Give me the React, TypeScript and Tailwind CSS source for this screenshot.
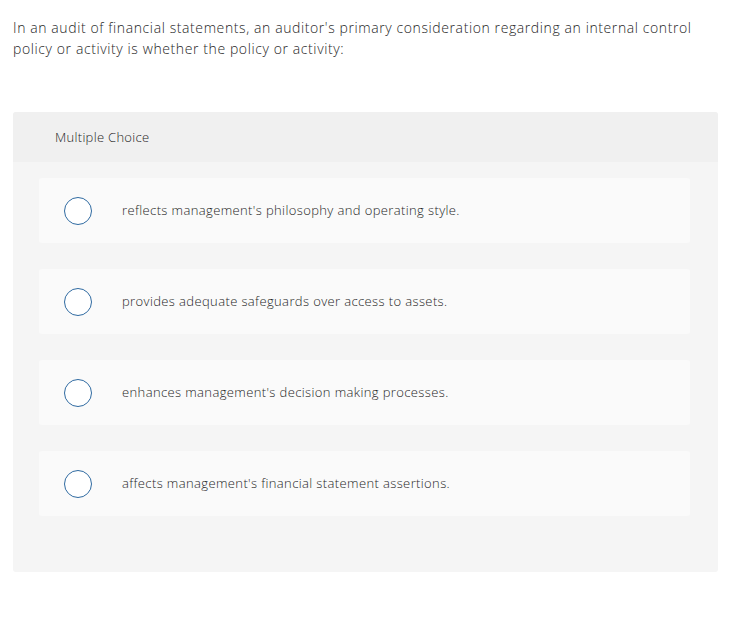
const OPTIONS = [
  "reflects management's philosophy and operating style.",
  'provides adequate safeguards over access to assets.',
  "enhances management's decision making processes.",
  "affects management's financial statement assertions.",
]

export default function App() {
  return (
    <div className="min-h-screen bg-white font-['Open_Sans',sans-serif] font-light text-[#1f1f1f]">
      <div className="px-[13px] pt-[17px] pr-[28px] text-[14px] leading-[21px] tracking-[0.6px]">
        In an audit of financial statements, an auditor's primary consideration regarding an internal control policy or
        activity is whether the policy or activity:
      </div>

      <div className="ml-[13px] mr-[20px] mt-[53px] h-[460px] rounded-[3px] bg-[#f5f5f5]">
        {/* Header */}
        <div className="flex h-[50px] items-center rounded-t-[3px] bg-[#f0f0f0] pl-[42px] pt-[1px] text-[13px] tracking-[0.3px]">
          Multiple Choice
        </div>

        {/* Options */}
        <div className="flex flex-col gap-[26px] pl-[26px] pr-[28px] pt-[16px]">
          {OPTIONS.map(o => (
            <div key={o} className="flex h-[65px] items-center rounded-[3px] bg-[#fafafa] pl-[25px]">
              <div className="h-[28px] w-[28px] shrink-0 rounded-full border-[1.5px] border-[#2f6aa1] bg-white" />
              <span className="ml-[30px] pt-[1px] text-[13px] tracking-[0.38px]">{o}</span>
            </div>
          ))}
        </div>
      </div>
    </div>
  )
}
